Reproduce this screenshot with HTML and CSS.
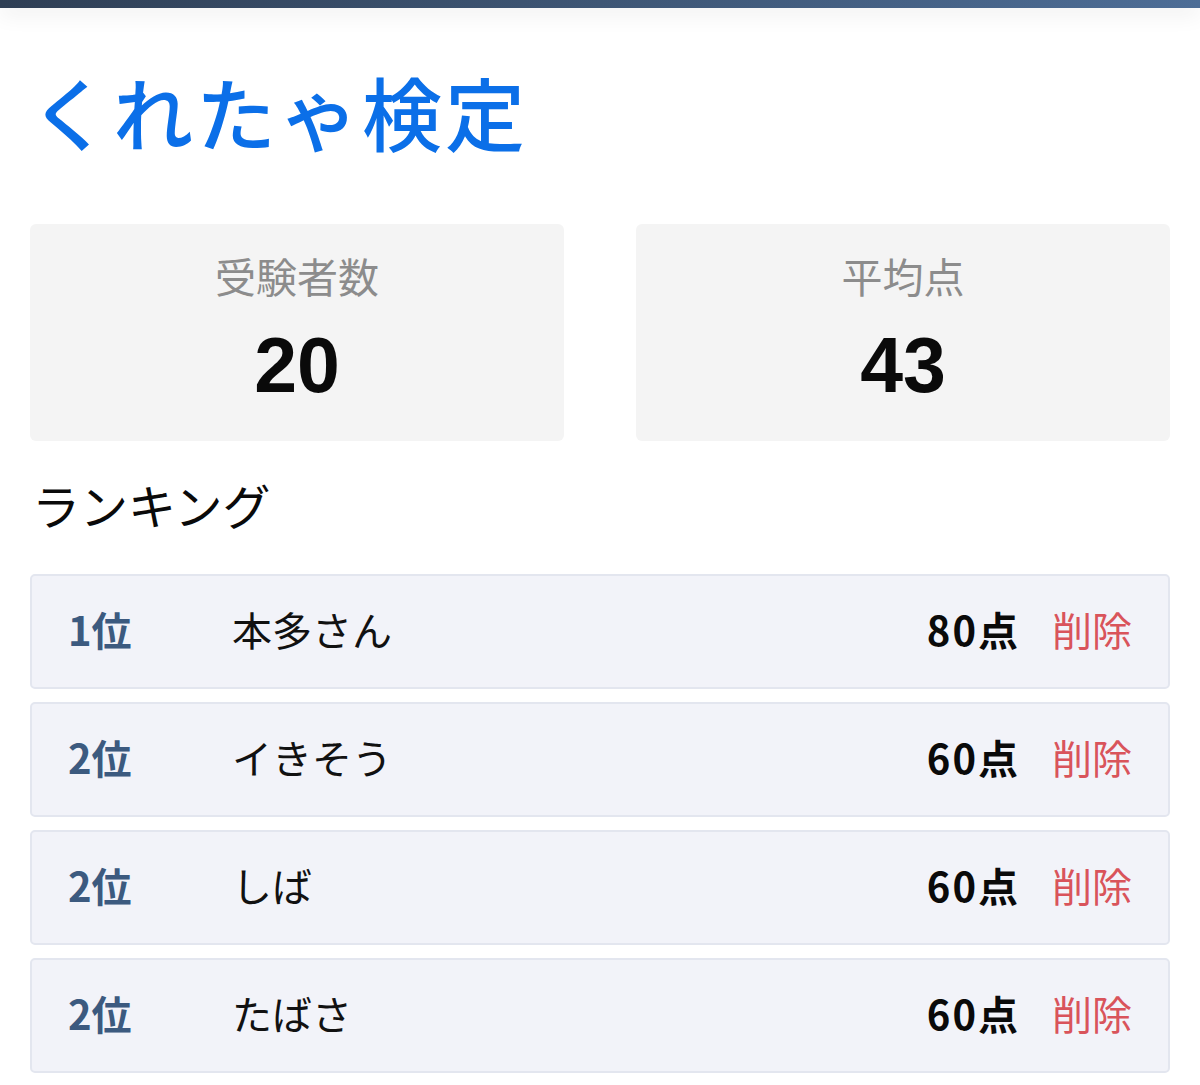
FILE: index.html
```html
<!DOCTYPE html>
<html lang="ja">
<head>
<meta charset="utf-8">
<title>くれたゃ検定</title>
<link rel="stylesheet" href="styles.css">
</head>
<body>
<div class="topbar"></div>
<main class="page">
  <h1 class="title">くれたゃ検定</h1>
  <section class="stats">
    <div class="stat">
      <div class="stat-label">受験者数</div>
      <div class="stat-value">20</div>
    </div>
    <div class="stat">
      <div class="stat-label">平均点</div>
      <div class="stat-value">43</div>
    </div>
  </section>
  <h2 class="section-title">ランキング</h2>
  <ul class="ranking">
    <li class="row">
      <span class="rank">1位</span>
      <span class="name">本多さん</span>
      <span class="score">80点</span>
      <span class="delete">削除</span>
    </li>
    <li class="row">
      <span class="rank">2位</span>
      <span class="name">イきそう</span>
      <span class="score">60点</span>
      <span class="delete">削除</span>
    </li>
    <li class="row">
      <span class="rank">2位</span>
      <span class="name">しば</span>
      <span class="score">60点</span>
      <span class="delete">削除</span>
    </li>
    <li class="row">
      <span class="rank">2位</span>
      <span class="name">たばさ</span>
      <span class="score">60点</span>
      <span class="delete">削除</span>
    </li>
  </ul>
</main>
</body>
</html>
```
FILE: styles.css
```css
html, body {
  margin: 0;
  padding: 0;
  background: #ffffff;
}
body {
  font-family: "Noto Sans CJK JP", "Noto Sans", sans-serif;
  color: #111;
  overflow: hidden;
}
.topbar {
  height: 8px;
  background: linear-gradient(90deg, #2f3f55 0%, #3e5675 50%, #4d6d96 100%);
  box-shadow: 0 4px 22px rgba(0, 0, 0, 0.12);
}
.page {
  padding: 0 30px;
}
.title {
  margin: 42px 0 0 0;
  font-size: 80px;
  line-height: 120px;
  font-weight: 500;
  color: #0b6fe8;
  letter-spacing: 3px;
}
.stats {
  display: grid;
  grid-template-columns: 1fr 1fr;
  column-gap: 72px;
  margin-top: 54px;
}
.stat {
  background: #f4f4f4;
  border-radius: 6px;
  height: 217px;
  display: flex;
  flex-direction: column;
  align-items: center;
  padding-top: 21px;
  box-sizing: border-box;
}
.stat-label {
  font-size: 41px;
  line-height: 60px;
  color: #8c8c8c;
  font-weight: 400;
}
.stat-value {
  font-family: "Liberation Sans", Arial, sans-serif;
  font-weight: 700;
  font-size: 77px;
  line-height: 90px;
  color: #0a0a0a;
  margin-top: 15px;
}
.section-title {
  margin: 31px 0 0 2px;
  font-size: 48px;
  line-height: 64px;
  font-weight: 400;
  color: #0a0a0a;
}
.ranking {
  list-style: none;
  margin: 38px 0 0 0;
  padding: 0;
  display: flex;
  flex-direction: column;
  gap: 13px;
}
.row {
  display: flex;
  align-items: center;
  height: 115px;
  box-sizing: border-box;
  background: #f2f3f9;
  border: 2px solid #e3e6ef;
  border-radius: 5px;
  padding: 0 36px 6px 36px;
  font-size: 40px;
}
.rank {
  width: 164px;
  font-weight: 700;
  color: #3c5a7f;
}
.name {
  flex: 1;
  color: #111;
}
.score {
  font-weight: 700;
  color: #0a0a0a;
  letter-spacing: 2px;
}
.delete {
  margin-left: 32px;
  color: #d9545b;
}
```
